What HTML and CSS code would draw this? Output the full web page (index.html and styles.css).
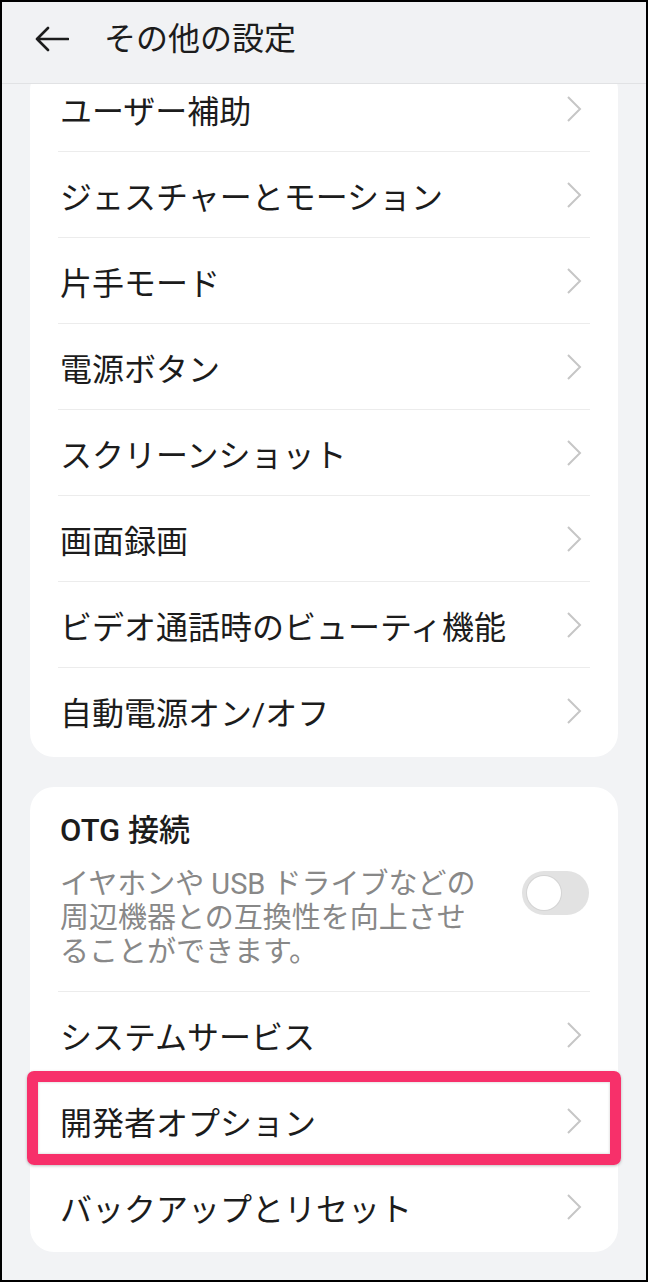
FILE: index.html
```html
<!DOCTYPE html>
<html lang="ja">

<head>
    <meta charset="UTF-8">
    <title>その他の設定</title>
    <link rel="stylesheet" href="styles.css">
</head>

<body>
    <div class="screen">
        <div class="header">
            <svg class="back" width="34" height="26" viewBox="0 0 34 26">
                <path d="M2 13 H33 M13 2 L2 13 L13 24" fill="none" stroke="#1c1c1c" stroke-width="2.6" stroke-linecap="round" stroke-linejoin="round" />
            </svg>
            <h1 class="title">その他の設定</h1>
        </div>
        <div class="content">
            <div class="card card-first">
                <div class="row"><span>ユーザー補助</span><svg class="chev" width="16" height="26" viewBox="0 0 16 26"><path d="M2 1 L14 13 L2 25" /></svg></div>
                <div class="row"><span>ジェスチャーとモーション</span><svg class="chev" width="16" height="26" viewBox="0 0 16 26"><path d="M2 1 L14 13 L2 25" /></svg></div>
                <div class="row"><span>片手モード</span><svg class="chev" width="16" height="26" viewBox="0 0 16 26"><path d="M2 1 L14 13 L2 25" /></svg></div>
                <div class="row"><span>電源ボタン</span><svg class="chev" width="16" height="26" viewBox="0 0 16 26"><path d="M2 1 L14 13 L2 25" /></svg></div>
                <div class="row"><span>スクリーンショット</span><svg class="chev" width="16" height="26" viewBox="0 0 16 26"><path d="M2 1 L14 13 L2 25" /></svg></div>
                <div class="row"><span>画面録画</span><svg class="chev" width="16" height="26" viewBox="0 0 16 26"><path d="M2 1 L14 13 L2 25" /></svg></div>
                <div class="row"><span>ビデオ通話時のビューティ機能</span><svg class="chev" width="16" height="26" viewBox="0 0 16 26"><path d="M2 1 L14 13 L2 25" /></svg></div>
                <div class="row"><span>自動電源オン/オフ</span><svg class="chev" width="16" height="26" viewBox="0 0 16 26"><path d="M2 1 L14 13 L2 25" /></svg></div>
            </div>

            <div class="card">
                <div class="switch-row">
                    <div class="switch-text">
                        <div class="switch-title">OTG 接続</div>
                        <div class="switch-desc">イヤホンや USB ドライブなどの<br>周辺機器との互換性を向上させ<br>ることができます。</div>
                    </div>
                    <div class="toggle"><div class="knob"></div></div>
                </div>
                <div class="row"><span>システムサービス</span><svg class="chev" width="16" height="26" viewBox="0 0 16 26"><path d="M2 1 L14 13 L2 25" /></svg></div>
                <div class="row marked"><span>開発者オプション</span><svg class="chev" width="16" height="26" viewBox="0 0 16 26"><path d="M2 1 L14 13 L2 25" /></svg>
                    <div class="mark"></div>
                </div>
                <div class="row"><span>バックアップとリセット</span><svg class="chev" width="16" height="26" viewBox="0 0 16 26"><path d="M2 1 L14 13 L2 25" /></svg></div>
            </div>
        </div>
    </div>
</body>

</html>
```

FILE: styles.css
```css
body {
    margin: 0;
    font-family: Roboto, "Noto Sans CJK JP", sans-serif;
    color: #1c1c1c;
}

.screen {
    box-sizing: border-box;
    height: 1282px;
    border: 2px solid #000;
    background: #f2f3f5;
    display: flex;
    flex-direction: column;
    overflow: hidden;
}

.header {
    height: 82px;
    flex-shrink: 0;
    box-sizing: border-box;
    border-bottom: 1px solid #e1e2e4;
    display: flex;
    align-items: center;
    padding: 0 0 8px 33px;
    background: #f1f2f4;
}

.back {
    display: block;
    margin-right: 35px;
}

.title {
    margin: 0;
    font-size: 32px;
    font-weight: 400;
    line-height: 40px;
}

.content {
    flex: 1;
    overflow: hidden;
    padding: 0 28px;
}

.card {
    background: #fff;
    border-radius: 24px;
    padding-bottom: 2px;
    margin-top: 30px;
}

.card-first {
    margin-top: -18px;
    padding-bottom: 3px;
}

.row {
    height: 86px;
    box-sizing: border-box;
    margin: 0 28px;
    padding: 0 8px 0 2px;
    border-bottom: 1px solid #ececec;
    display: flex;
    align-items: center;
    justify-content: space-between;
    font-size: 32px;
}

.row:last-child {
    border-bottom: none;
}

.chev {
    display: block;
    flex-shrink: 0;
}

.chev path {
    fill: none;
    stroke: #c6c6c6;
    stroke-width: 2;
}

.switch-row {
    margin: 0 28px;
    padding: 24px 0 22px 2px;
    border-bottom: 1px solid #ececec;
    display: flex;
    align-items: center;
    justify-content: space-between;
}

.switch-title {
    font-size: 31px;
    font-weight: 500;
    line-height: 40px;
}

.switch-desc {
    margin-top: 16px;
    font-size: 29px;
    line-height: 34px;
    color: #888;
    white-space: nowrap;
}

.toggle {
    width: 67px;
    height: 44px;
    border-radius: 22px;
    background: #e2e2e2;
    box-sizing: border-box;
    padding: 5px;
    margin-right: 1px;
    margin-top: 6px;
}

.knob {
    width: 34px;
    height: 34px;
    border-radius: 50%;
    background: #fff;
    box-shadow: 0 0 0 1px #d4d4d4;
}

.marked {
    position: relative;
}

.mark {
    position: absolute;
    top: -7px;
    bottom: -2px;
    left: -31px;
    right: -31px;
    border: 11px solid #f7306a;
    border-radius: 7px;
    box-shadow: 0 1px 3px rgba(0, 0, 0, 0.25), inset 0 0 3px rgba(0, 0, 0, 0.2);
}
```
